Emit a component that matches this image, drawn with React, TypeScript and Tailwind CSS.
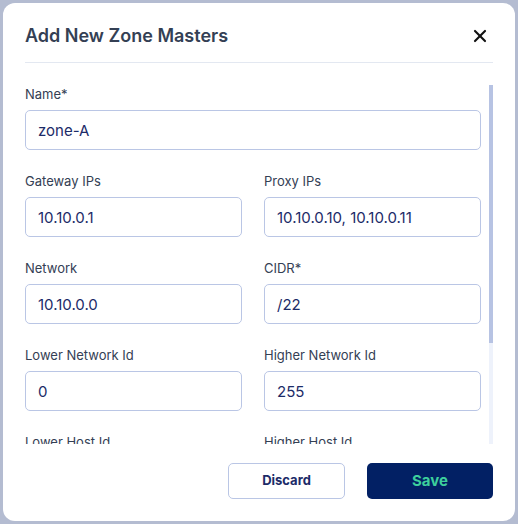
import React from "react";
import { X } from "lucide-react";

type Field = { label: string; value: string };

const rows: Field[][] = [
  [{ label: "Name*", value: "zone-A" }],
  [
    { label: "Gateway IPs", value: "10.10.0.1" },
    { label: "Proxy IPs", value: "10.10.0.10, 10.10.0.11" },
  ],
  [
    { label: "Network", value: "10.10.0.0" },
    { label: "CIDR*", value: "/22" },
  ],
  [
    { label: "Lower Network Id", value: "0" },
    { label: "Higher Network Id", value: "255" },
  ],
  [
    { label: "Lower Host Id", value: "1" },
    { label: "Higher Host Id", value: "254" },
  ],
];

function FormField({ label, value, full }: Field & { full?: boolean }) {
  return (
    <div className={full ? "col-span-2 flex flex-col" : "flex flex-col"}>
      <label className="mb-[7px] text-[13px] leading-[18px] text-[#344054]">
        {label}
      </label>
      <input
        defaultValue={value}
        className="h-10 w-full rounded-[5px] border border-[#bac6e5] bg-white px-3 text-[15px] text-[#1c2b68] outline-none"
      />
    </div>
  );
}

export default function App() {
  return (
    <div
      className="h-[524px] w-[518px] bg-[#b4bcd1] p-[3px]"
      style={{ fontFamily: "Inter, 'Noto Sans', sans-serif" }}
    >
      <div className="flex h-full flex-col rounded-xl bg-white">
        {/* header */}
        <div className="px-[22px] pt-[19px]">
          <div className="flex items-center justify-between">
            <h2 className="text-[18px] font-semibold leading-7 text-[#344054]">
              Add New Zone Masters
            </h2>
            <button className="mr-[3px] text-[#111111]">
              <X size={20} strokeWidth={2.6} />
            </button>
          </div>
          <div className="mt-3 h-px bg-[#e3e8f1]" />
        </div>

        {/* scroll body, scrollbar drawn on top since headless hides it */}
        <div className="relative mx-[22px] mt-[22px] min-h-0 flex-1">
          <div className="h-full overflow-y-auto [scrollbar-width:none]">
            <div className="grid grid-cols-2 gap-x-[22px] gap-y-[22px] pb-[86px] pr-3">
              {rows.map((row) =>
                row.map((f) => (
                  <FormField
                    key={f.label}
                    label={f.label}
                    value={f.value}
                    full={row.length === 1}
                  />
                ))
              )}
            </div>
          </div>
          <div className="absolute bottom-0 right-0 top-0 w-1 bg-[#eef2fb]">
            <div className="h-[258px] w-full bg-[#b7c3e3]" />
          </div>
        </div>

        {/* footer */}
        <div className="flex justify-end gap-[22px] px-[22px] pb-[22px] pt-[19px]">
          <button className="h-9 w-[117px] rounded-[5px] border border-[#bac6e5] bg-white text-[13px] font-bold text-[#1c2b68]">
            Discard
          </button>
          <button className="h-9 w-[126px] rounded-[5px] bg-[#022064] text-[15px] font-bold text-[#3dcf9c]">
            Save
          </button>
        </div>
      </div>
    </div>
  );
}
